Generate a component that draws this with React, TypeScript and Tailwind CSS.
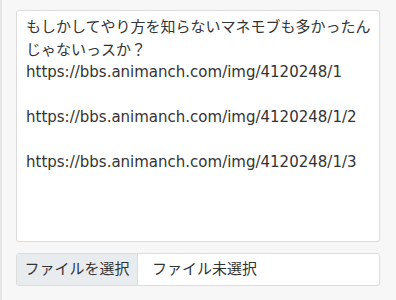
import { useState } from "react";

const initialText =
  "もしかしてやり方を知らないマネモブも多かったんじゃないっスか？\nhttps://bbs.animanch.com/img/4120248/1\n\nhttps://bbs.animanch.com/img/4120248/1/2\n\nhttps://bbs.animanch.com/img/4120248/1/3";

export default function App() {
  const [body, setBody] = useState(initialText);
  const [fileName, setFileName] = useState("");

  return (
    <div
      className="h-[300px] w-[396px] bg-[#f7f7f7] border-l-2 border-[#e6e6e6] pl-[14px] pr-[16px] pt-[10px]"
      style={{ fontFamily: '"DejaVu Sans", "Noto Sans CJK JP", sans-serif' }}
    >
      <textarea
        value={body}
        onChange={(e) => setBody(e.target.value)}
        className="block h-[232px] w-full resize-none rounded-[3px] border border-[#dcdcdc] bg-white pl-[9px] pr-[5px] pt-[5px] text-[15px] leading-[22.5px] text-[#333] outline-none"
      />
      <label className="mt-[11px] flex h-[33px] w-full cursor-pointer overflow-hidden rounded-[3px] border border-[#dcdcdc] bg-white text-[15px] text-[#333]">
        <span className="flex w-[121px] items-center justify-center border-r border-[#dcdcdc] bg-[#e9ecef]">
          ファイルを選択
        </span>
        <span className="flex items-center pl-[14px]">
          {fileName || "ファイル未選択"}
        </span>
        <input
          type="file"
          className="hidden"
          onChange={(e) => setFileName(e.target.files?.[0]?.name ?? "")}
        />
      </label>
    </div>
  );
}
